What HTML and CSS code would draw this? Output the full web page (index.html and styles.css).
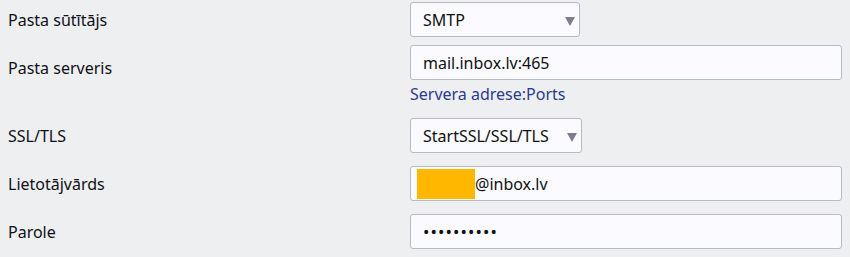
FILE: index.html
```html
<!DOCTYPE html>
<html>
<head>
    <meta charset="utf-8">
    <title>Pasta iestatījumi</title>
    <link rel="stylesheet" href="styles.css">
</head>
<body>
    <form class="mail-form">
        <div class="row">
            <label class="row-label" for="mail-sender">Pasta sūtītājs</label>
            <div class="row-field">
                <span class="select-wrap">
                    <select id="mail-sender" class="select-small">
                        <option>SMTP</option>
                    </select>
                </span>
            </div>
        </div>
        <div class="row row-tight row-top">
            <label class="row-label label-offset" for="mail-server">Pasta serveris</label>
            <div class="row-field">
                <input type="text" id="mail-server" class="text-input" value="mail.inbox.lv:465">
                <div class="hint">Servera adrese:Ports</div>
            </div>
        </div>
        <div class="row">
            <label class="row-label" for="mail-ssl">SSL/TLS</label>
            <div class="row-field">
                <span class="select-wrap">
                    <select id="mail-ssl" class="select-small select-ssl">
                        <option>StartSSL/SSL/TLS</option>
                    </select>
                </span>
            </div>
        </div>
        <div class="row">
            <label class="row-label">Lietotājvārds</label>
            <div class="row-field">
                <div class="text-input fake-input"><span class="redact"></span>@inbox.lv</div>
            </div>
        </div>
        <div class="row">
            <label class="row-label" for="mail-pass">Parole</label>
            <div class="row-field">
                <input type="password" id="mail-pass" class="text-input password-input" value="abcdefghij">
            </div>
        </div>
    </form>
</body>
</html>
```

FILE: styles.css
```css
body {
    margin: 0;
    background-color: #eeeff1;
    font-family: 'Noto Sans', 'Open Sans', sans-serif;
    font-size: 16px;
    color: #111;
}
.mail-form {
    padding: 2px 8px 0 8px;
}
.row {
    display: grid;
    grid-template-columns: 402px 1fr;
    align-items: center;
    margin-top: 13px;
}
.row:first-child {
    margin-top: 0;
}
.row-tight {
    margin-top: 8px;
}
.row-top {
    align-items: start;
}
.row-label {
    line-height: 22px;
    color: #101018;
}
.label-offset {
    padding-top: 12px;
}
.row-field {
    display: flex;
    flex-direction: column;
    align-items: flex-start;
}
.text-input {
    width: 100%;
    height: 35px;
    box-sizing: border-box;
    padding: 0 12px;
    border: 1px solid #b6bac8;
    border-radius: 3px;
    background-color: #fafaff;
    font-family: inherit;
    font-size: 16px;
    color: #111;
    outline: none;
}
.password-input {
    letter-spacing: 1.1px;
    font-size: 17px;
}
.fake-input {
    display: flex;
    align-items: center;
    padding-left: 6px;
}
.redact {
    display: inline-block;
    width: 58px;
    height: 30px;
    background-color: #ffb700;
}
.hint {
    margin-top: 3px;
    line-height: 22px;
    color: #2b3a8e;
}
.select-wrap {
    position: relative;
    display: inline-block;
}
.select-wrap::after {
    content: "";
    position: absolute;
    right: 5px;
    top: 15px;
    border-left: 5px solid transparent;
    border-right: 5px solid transparent;
    border-top: 9px solid #7c7e8e;
    pointer-events: none;
}
.select-small {
    appearance: none;
    -webkit-appearance: none;
    min-width: 170px;
    height: 35px;
    padding: 0 28px 0 12px;
    border: 1px solid #b6bac8;
    border-radius: 3px;
    background-color: #fafaff;
    font-family: inherit;
    font-size: 16px;
    color: #111;
}
.select-ssl {
    min-width: 172px;
}
```
